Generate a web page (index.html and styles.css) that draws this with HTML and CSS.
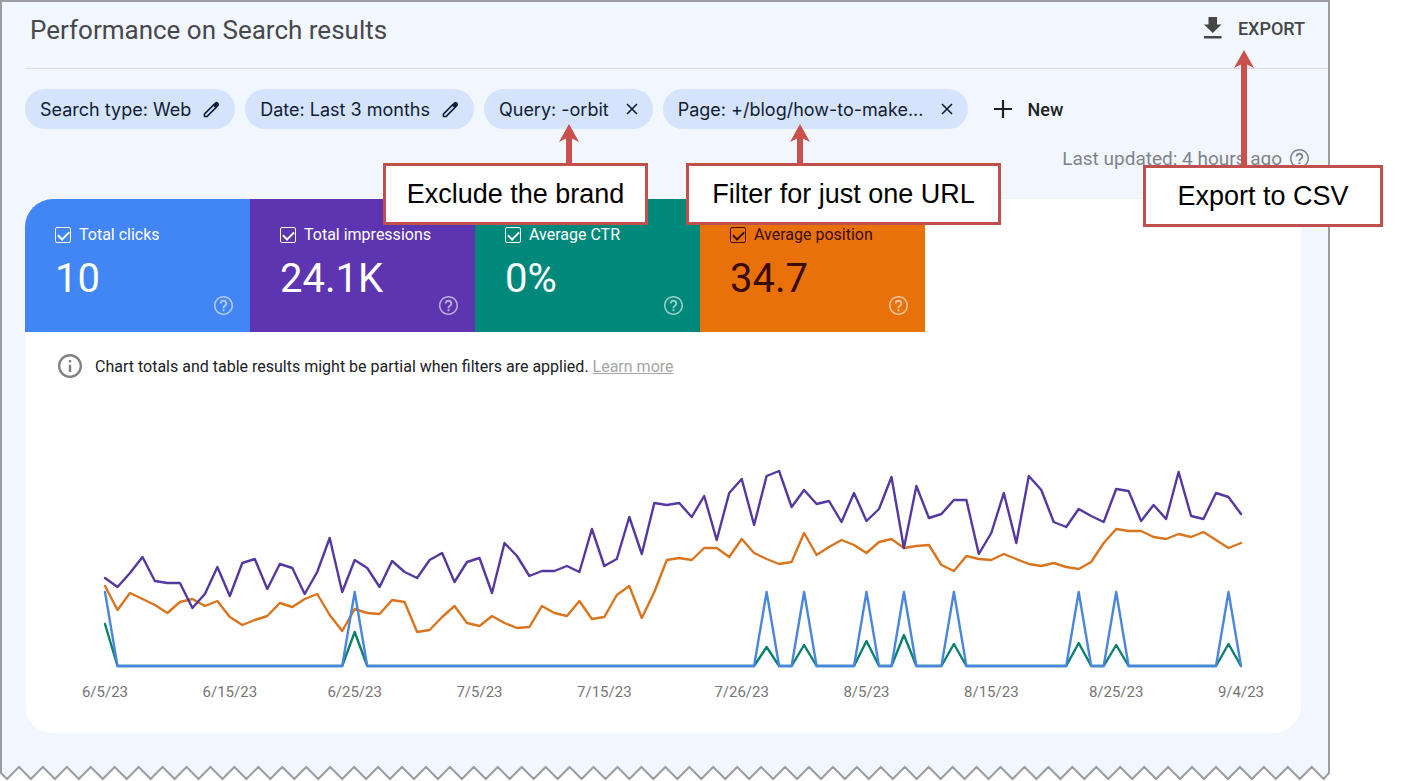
FILE: index.html
```html
<!DOCTYPE html>
<html lang="en">
<head>
  <meta charset="UTF-8">
  <meta name="viewport" content="width=device-width, initial-scale=1.0">
  <title>Performance on Search results</title>
  <link rel="stylesheet" href="styles.css">
</head>
<body>
  <svg class="sprite" aria-hidden="true">
    <symbol id="icon-help" viewBox="2 2 20 20">
      <path d="M11 18h2v-2h-2v2zm1-16C6.48 2 2 6.48 2 12s4.48 10 10 10 10-4.48 10-10S17.52 2 12 2zm0 18.4c-4.6 0-8.4-3.8-8.4-8.4s3.8-8.4 8.4-8.4 8.4 3.8 8.4 8.4-3.8 8.4-8.4 8.4zM12 6c-2.21 0-4 1.79-4 4h2c0-1.1.9-2 2-2s2 .9 2 2c0 2-3 1.75-3 5h2c0-2.25 3-2.5 3-5 0-2.21-1.79-4-4-4z"/>
    </symbol>
    <symbol id="icon-info" viewBox="2 2 20 20">
      <path d="M11 7h2v2h-2zm0 4h2v6h-2zm1-9C6.48 2 2 6.48 2 12s4.48 10 10 10 10-4.48 10-10S17.52 2 12 2zm0 18c-4.41 0-8-3.59-8-8s3.59-8 8-8 8 3.59 8 8-3.59 8-8 8z"/>
    </symbol>
    <symbol id="icon-pencil" viewBox="0 0 17 17">
      <path d="M1.400 15.600v-2.500L10.600 3.900l2.500 2.500-9.200 9.200z" fill="none" stroke="currentColor" stroke-width="1.500" stroke-linejoin="round"/>
      <path d="M10 3.500l2-2q1.500-1.300 3 0l.5.5q1.300 1.500 0 3l-2 2z"/>
    </symbol>
    <symbol id="icon-close" viewBox="0 0 12 12">
      <path d="M1 1l10 10M11 1L1 11" fill="none" stroke="currentColor" stroke-width="1.6"/>
    </symbol>
    <symbol id="icon-arrow-head" viewBox="0 0 20 18">
      <path d="M10 0l10 18-7-3.600H7L0 18z"/>
    </symbol>
  </svg>

  <div class="page">
    <main class="panel">
      <header class="header">
        <h1>Performance on Search results</h1>
        <button class="export" type="button">
          <svg viewBox="0 0 18 22" width="18" height="22"><path d="M4.500 0h8.500v7.500h4.500L8.750 16 0 7.500h4.500zM0 19h17.500v2.500H0z"/></svg>
          EXPORT
        </button>
      </header>

      <div class="filters">
        <button class="chip" type="button"><span>Search type: Web</span><svg class="pencil"><use href="#icon-pencil"/></svg></button>
        <button class="chip" type="button"><span>Date: Last 3 months</span><svg class="pencil"><use href="#icon-pencil"/></svg></button>
        <button class="chip chip-removable" type="button"><span>Query: -orbit</span><svg class="close"><use href="#icon-close"/></svg></button>
        <button class="chip chip-removable" type="button"><span>Page: +/blog/how-to-make...</span><svg class="close"><use href="#icon-close"/></svg></button>
        <button class="new" type="button">
          <svg viewBox="0 0 18 18" width="18" height="18"><path d="M9 0v18M0 9h18" stroke="currentColor" stroke-width="2.200"/></svg>
          New
        </button>
      </div>

      <p class="updated">Last updated: 4 hours ago <svg class="help"><use href="#icon-help"/></svg></p>

      <section class="card">
        <div class="metrics">
          <div class="metric clicks">
            <label><input type="checkbox" checked> Total clicks</label>
            <strong>10</strong>
            <svg class="help"><use href="#icon-help"/></svg>
          </div>
          <div class="metric impressions">
            <label><input type="checkbox" checked> Total impressions</label>
            <strong>24.1K</strong>
            <svg class="help"><use href="#icon-help"/></svg>
          </div>
          <div class="metric ctr">
            <label><input type="checkbox" checked> Average CTR</label>
            <strong>0%</strong>
            <svg class="help"><use href="#icon-help"/></svg>
          </div>
          <div class="metric position">
            <label><input type="checkbox" checked> Average position</label>
            <strong>34.7</strong>
            <svg class="help"><use href="#icon-help"/></svg>
          </div>
        </div>
        <p class="note">
          <svg class="info"><use href="#icon-info"/></svg>
          <span>Chart totals and table results might be partial when filters are applied. <a href="#">Learn more</a></span>
        </p>
        <svg class="chart" id="chart" viewBox="0 0 1276 310" role="img" aria-label="Performance over time"></svg>
      </section>
    </main>
    <svg class="torn-edge" viewBox="0 0 1330 17" aria-hidden="true"><path id="edge"/></svg>

    <div class="callout callout-brand">
      Exclude the brand
      <span class="arrow"><svg><use href="#icon-arrow-head"/></svg></span>
    </div>
    <div class="callout callout-url">
      Filter for just one URL
      <span class="arrow"><svg><use href="#icon-arrow-head"/></svg></span>
    </div>
    <div class="callout callout-csv">
      Export to CSV
      <span class="arrow"><svg><use href="#icon-arrow-head"/></svg></span>
    </div>
  </div>

  <script>
    const SVG_NS = "http://www.w3.org/2000/svg";
    const chart = document.getElementById("chart");
    const left = 80;
    const right = 1216;
    const baseline = 266;
    const days = 92;

    // y position of each day, 6/5/23 to 9/4/23
    const impressions = [
      178, 187, 173, 157, 181, 183, 183, 208, 194, 167, 196, 163, 159, 189, 164, 168,
      194, 172, 138, 192, 160, 168, 187, 161, 172, 178, 160, 153, 182, 162, 158, 193,
      143, 156, 176, 171, 171, 166, 172, 129, 166, 159, 117, 154, 103, 105, 103, 117,
      96, 140, 93, 79, 125, 76, 71, 107, 90, 104, 101, 122, 93, 121, 109, 77,
      148, 86, 118, 114, 100, 100, 154, 133, 93, 143, 76, 90, 122, 127, 109, 116,
      122, 89, 91, 121, 105, 119, 72, 116, 119, 93, 97, 114
    ];
    const position = [
      186, 210, 193, 199, 205, 213, 202, 199, 206, 201, 217, 225, 220, 216, 203, 207,
      199, 194, 215, 231, 209, 213, 214, 200, 202, 232, 230, 217, 206, 223, 226, 216,
      223, 228, 227, 206, 213, 216, 201, 219, 217, 195, 186, 218, 192, 160, 158, 160,
      148, 148, 157, 139, 153, 159, 164, 162, 133, 155, 147, 140, 145, 153, 142, 139,
      148, 146, 145, 165, 171, 156, 159, 160, 154, 159, 164, 166, 163, 167, 169, 162,
      143, 129, 131, 131, 137, 139, 134, 137, 132, 140, 148, 143
    ];

    // Days with a click, and the CTR peak on that day
    const ctrPeaks = { 0: 224, 20: 232, 53: 247, 56: 245, 61: 241, 64: 235, 68: 244, 78: 243, 81: 245, 90: 244 };
    const clicks = [];
    const ctr = [];
    for (let i = 0; i < days; i++) {
      clicks.push(i in ctrPeaks ? 192 : baseline);
      ctr.push(i in ctrPeaks ? ctrPeaks[i] : baseline);
    }

    function xOf(day) {
      return left + (right - left) * day / (days - 1);
    }

    function drawLine(values, name) {
      const line = document.createElementNS(SVG_NS, "polyline");
      line.setAttribute("points", values.map((y, i) => `${xOf(i).toFixed(1)},${y}`).join(" "));
      line.setAttribute("class", `line line-${name}`);
      chart.appendChild(line);
    }

    drawLine(position, "position");
    drawLine(ctr, "ctr");
    drawLine(impressions, "impressions");
    drawLine(clicks, "clicks");

    // Date labels
    const labels = {
      0: "6/5/23", 10: "6/15/23", 20: "6/25/23", 30: "7/5/23", 40: "7/15/23",
      51: "7/26/23", 61: "8/5/23", 71: "8/15/23", 81: "8/25/23", 91: "9/4/23"
    };
    for (const day in labels) {
      const text = document.createElementNS(SVG_NS, "text");
      text.setAttribute("x", xOf(Number(day)));
      text.setAttribute("y", 297);
      text.textContent = labels[day];
      chart.appendChild(text);
    }

    // Zigzag along the bottom of the panel
    const tooth = 23.94;
    let edge = "M1 -2V9";
    for (let i = 0; i < 55; i++) {
      const x = 7 + i * tooth;
      edge += `L${x.toFixed(1)} 15L${(x + tooth / 2).toFixed(1)} 3`;
    }
    edge += "L1323.700 15L1329 9V-2";
    document.getElementById("edge").setAttribute("d", edge);
  </script>
</body>
</html>
```

FILE: styles.css
```css
* {
  box-sizing: border-box;
}
body {
  margin: 0;
  background: #fff;
  font-family: Roboto, "Liberation Sans", sans-serif;
  color: #202124;
}
h1, p {
  margin: 0;
}
button {
  border: none;
  background: none;
  padding: 0;
  font-family: inherit;
  color: inherit;
  cursor: pointer;
}
svg {
  display: block;
  flex: none;
  fill: currentColor;
}
.sprite {
  position: absolute;
  width: 0;
  height: 0;
}
.page {
  position: relative;
  padding-right: 97px;
}
.panel {
  border: 2px solid #9b9da2;
  border-bottom: none;
  background: #f2f6fe;
  padding: 0 0 31px 23px;
}

/* Header */
.header {
  display: flex;
  justify-content: space-between;
  align-items: flex-start;
  height: 67px;
  padding: 13px 23px 0 5px;
  border-bottom: 1px solid #dadde6;
}
h1 {
  font-size: 26px;
  font-weight: 400;
  line-height: 30px;
  color: #47484c;
}
.export {
  display: flex;
  align-items: center;
  gap: 16px;
  height: 26px;
  font-size: 18px;
  font-weight: 500;
  color: #444746;
}

/* Filters */
.filters {
  display: flex;
  gap: 10px;
  padding-top: 20px;
}
.chip {
  display: flex;
  align-items: center;
  gap: 12px;
  height: 40px;
  padding: 0 15px;
  border-radius: 20px;
  background: #d5e3fc;
  font-family: Inter, Roboto, sans-serif;
  font-size: 18px;
  color: #0f1d33;
}
.chip-removable {
  gap: 17px;
}
.pencil {
  width: 17px;
  height: 17px;
}
.close {
  width: 12px;
  height: 12px;
}
.new {
  display: flex;
  align-items: center;
  gap: 16px;
  margin-left: 16px;
  font-size: 18px;
  font-weight: 500;
}
.updated {
  display: flex;
  justify-content: flex-end;
  align-items: center;
  gap: 8px;
  height: 58px;
  padding-right: 19px;
  font-size: 19px;
  color: #80848a;
}
.help {
  width: 19px;
  height: 19px;
}

/* Card */
.card {
  margin: 12px 27px 0 0;
  border-radius: 28px;
  background: #fff;
  overflow: hidden;
}
.metrics {
  display: grid;
  grid-template-columns: repeat(4, 225px);
}
.metric {
  position: relative;
  height: 133px;
  padding: 26px 30px 0;
  color: #fff;
}
.metric label {
  display: flex;
  align-items: center;
  gap: 8px;
  font-size: 16px;
  line-height: 20px;
}
.metric strong {
  display: block;
  margin-top: 9px;
  font-size: 40px;
  font-weight: 400;
  line-height: 50px;
}
.metric .help {
  position: absolute;
  right: 17px;
  bottom: 17px;
  opacity: 0.6;
}
.metric input {
  appearance: none;
  width: 16px;
  height: 16px;
  margin: 0;
  border: 1px solid currentColor;
  border-radius: 2px;
  color: inherit;
}
.metric input:checked::after {
  content: "";
  display: block;
  width: 9px;
  height: 5px;
  margin: 3px 0 0 2px;
  border: solid currentColor;
  border-width: 0 0 2px 2px;
  transform: rotate(-45deg);
}
.clicks {
  background: #4285f4;
}
.impressions {
  background: #5e35b1;
}
.ctr {
  background: #00897b;
}
.position {
  background: #e8710a;
  color: #3b0a05;
}
.position .help {
  color: #fff;
}
.note {
  display: flex;
  align-items: center;
  gap: 13px;
  height: 68px;
  padding-left: 33px;
  font-size: 16px;
}
.note a {
  color: #a5a5a5;
}
.info {
  width: 24px;
  height: 24px;
  color: #808080;
}

/* Chart */
.chart {
  width: 100%;
  height: auto;
  padding-bottom: 23px;
  box-sizing: content-box;
}
.chart text {
  font-size: 15px;
  fill: #757575;
  text-anchor: middle;
}
.line {
  fill: none;
  stroke-width: 2.4;
  stroke-linejoin: round;
  stroke-linecap: round;
}
.line-clicks {
  stroke: #4a86dc;
}
.line-impressions {
  stroke: #5539a0;
}
.line-ctr {
  stroke: #0b8070;
}
.line-position {
  stroke: #d9751e;
}
.torn-edge {
  width: 100%;
  height: auto;
}
.torn-edge path {
  fill: #f2f6fe;
  stroke: #9b9da2;
  stroke-width: 2;
}

/* Callouts */
.callout {
  position: absolute;
  display: flex;
  align-items: center;
  justify-content: center;
  height: 62px;
  border: 3px solid #c0504d;
  background: #fff;
  font-family: "Liberation Sans", Arial, sans-serif;
  font-size: 27px;
  color: #000;
}
.callout-brand {
  top: 163px;
  left: 383px;
  width: 265px;
}
.callout-url {
  top: 163px;
  left: 686px;
  width: 315px;
}
.callout-csv {
  top: 165px;
  right: 44px;
  width: 240px;
}
.arrow {
  position: absolute;
  bottom: 100%;
  left: 180px;
  width: 6px;
  height: 28px;
  background: #c9504b;
}
.arrow svg {
  width: 20px;
  height: 18px;
  margin: -14px 0 0 -7px;
  color: #c9504b;
}
.callout-url .arrow {
  left: 108px;
}
.callout-csv .arrow {
  left: 95px;
  height: 104px;
}
```
